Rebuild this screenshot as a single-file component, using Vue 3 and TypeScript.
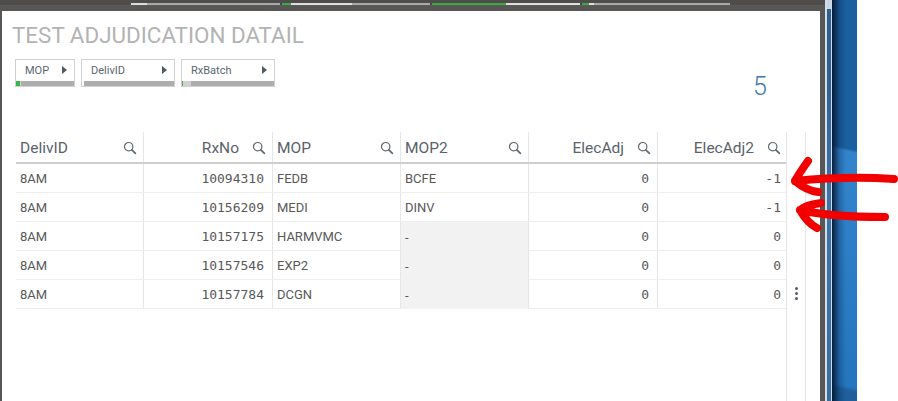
<script setup lang="ts">
interface Segment {
  width: number;
  color: string;
}

interface Column {
  label: string;
  field: string;
  align: "left" | "right";
  mono: boolean;
}

const segments: Segment[] = [
  { width: 16, color: "#dcdcdc" },
  { width: 133, color: "#a9a9a9" },
  { width: 2, color: "#4a4846" },
  { width: 9, color: "#3aaa45" },
  { width: 61, color: "#dedede" },
  { width: 78, color: "#a9a9a9" },
  { width: 2, color: "#4a4846" },
  { width: 74, color: "#3aaa45" },
  { width: 74, color: "#dedede" },
  { width: 2, color: "#4a4846" },
  { width: 7, color: "#3aaa45" },
  { width: 5, color: "#dedede" },
  { width: 136, color: "#a9a9a9" }
];

const filters = [
  { label: "MOP", width: 60, lead: "lead-mop" },
  { label: "DelivID", width: 94, lead: "lead-deliv" },
  { label: "RxBatch", width: 94, lead: "lead-batch" }
];

const columns: Column[] = [
  { label: "DelivID", field: "deliv", align: "left", mono: false },
  { label: "RxNo", field: "rx", align: "right", mono: true },
  { label: "MOP", field: "mop", align: "left", mono: false },
  { label: "MOP2", field: "mop2", align: "left", mono: false },
  { label: "ElecAdj", field: "adj", align: "right", mono: true },
  { label: "ElecAdj2", field: "adj2", align: "right", mono: true }
];

const rows: Record<string, string>[] = [
  { deliv: "8AM", rx: "10094310", mop: "FEDB", mop2: "BCFE", adj: "0", adj2: "-1" },
  { deliv: "8AM", rx: "10156209", mop: "MEDI", mop2: "DINV", adj: "0", adj2: "-1" },
  { deliv: "8AM", rx: "10157175", mop: "HARMVMC", mop2: "-", adj: "0", adj2: "0" },
  { deliv: "8AM", rx: "10157546", mop: "EXP2", mop2: "-", adj: "0", adj2: "0" },
  { deliv: "8AM", rx: "10157784", mop: "DCGN", mop2: "-", adj: "0", adj2: "0" }
];
</script>

<template>
  <div class="screen">
    <div class="app">
      <div class="topbar">
        <div class="strip">
          <span
            v-for="(seg, i) in segments"
            :key="i"
            :style="{ width: seg.width + 'px', background: seg.color }"
          />
        </div>
      </div>
      <div class="sheet">
        <h1 class="title">TEST ADJUDICATION DATAIL</h1>
        <div class="controls">
          <div class="filters">
            <div v-for="f in filters" :key="f.label" class="pill" :style="{ width: f.width + 'px' }">
              <div class="pill-main">
                <span>{{ f.label }}</span>
                <i class="caret" />
              </div>
              <div class="pill-bar">
                <i :class="f.lead" />
              </div>
            </div>
          </div>
          <div class="kpi">5</div>
        </div>
        <div class="table-wrap">
          <div class="table">
            <div class="row head">
              <div v-for="c in columns" :key="c.field" class="cell" :class="c.align">
                <span class="head-label">{{ c.label }}</span>
                <svg class="lens" width="14" height="14" viewBox="0 0 14 14">
                  <circle cx="5.7" cy="5.7" r="4.2" fill="none" stroke="#5f6972" stroke-width="1.2" />
                  <path d="M8.8 8.8 L12.4 12.4" stroke="#5f6972" stroke-width="1.7" stroke-linecap="round" />
                </svg>
              </div>
            </div>
            <div v-for="(r, i) in rows" :key="i" class="row body">
              <div
                v-for="c in columns"
                :key="c.field"
                class="cell"
                :class="[c.align, { mono: c.mono, nulled: r[c.field] === '-' }]"
              >
                {{ r[c.field] }}
              </div>
            </div>
          </div>
          <div class="rail">
            <div class="dots"><i /><i /><i /></div>
          </div>
        </div>
      </div>
    </div>
    <div class="scroller" />
    <div class="desk" />
    <div class="blank" />
    <svg class="ink" width="898" height="401" viewBox="0 0 898 401">
      <path d="M894 179 C865 177 825 178 795 181 M808 161 C803 168 798 175 795 181 C801 186 808 191 818 192" />
      <path d="M885 217 C860 217 825 216 800 210 M821 203 C812 204 805 206 800 210 C804 217 809 224 817 228" />
    </svg>
  </div>
</template>

<style>
html,
body {
  margin: 0;
  background: #fff;
}
</style>

<style scoped>
.screen {
  position: relative;
  display: flex;
  width: 898px;
  height: 401px;
  overflow: hidden;
  background: #fff;
  font-family: "Roboto", "Noto Sans", sans-serif;
}
.app {
  display: flex;
  flex-direction: column;
  width: 825px;
  background: #595755;
}
.topbar {
  flex: 0 0 11px;
  padding: 3px 0 0 131px;
  box-sizing: border-box;
  background: linear-gradient(#4f4d4b 0 5px, #5d5b59 5px 6px, #585654 6px);
}
.strip {
  display: flex;
  height: 2px;
}
.sheet {
  flex: 1;
  display: flex;
  flex-direction: column;
  min-height: 0;
  margin: 0 5px 0 2px;
  padding: 0 0 0 10px;
  background: #fff;
}
.title {
  margin: 11px 0 0;
  font-size: 22.4px;
  line-height: 26px;
  font-weight: 400;
  color: #b3b3b3;
  white-space: nowrap;
}
.controls {
  display: flex;
  justify-content: space-between;
  height: 73px;
  margin-top: 11px;
}
.filters {
  display: flex;
  gap: 6px;
  height: 28px;
  padding-left: 3px;
}
.pill {
  display: flex;
  flex-direction: column;
  box-sizing: border-box;
  border: 1px solid #d2d2d2;
  background: #fff;
}
.pill-main {
  flex: 1;
  display: flex;
  align-items: center;
  justify-content: space-between;
  padding: 0 7px 1px 9px;
  font-size: 11px;
  color: #5a6670;
}
.caret {
  width: 0;
  height: 0;
  border-left: 5px solid #4f5962;
  border-top: 4px solid transparent;
  border-bottom: 4px solid transparent;
}
.pill-bar {
  display: flex;
  height: 5px;
  background: #adadad;
}
.lead-mop {
  width: 4px;
  background: #3ab54a;
  box-shadow: 1px 0 0 #cfcfcf;
}
.lead-deliv {
  width: 2px;
  background: #fff;
}
.lead-batch {
  width: 9px;
  background: linear-gradient(90deg, #3ab54a 0 1px, #d0d0d0 1px);
}
.kpi {
  width: 67px;
  padding-top: 14px;
  box-sizing: border-box;
  font-size: 25px;
  line-height: 28px;
  font-weight: 300;
  color: #3f76b3;
}
.table-wrap {
  flex: 1;
  display: flex;
  min-height: 0;
  margin-left: 4px;
}
.table {
  flex: 0 0 771px;
}
.row {
  display: grid;
  grid-template-columns: 128px 129px 128px 128px 129px 129px;
}
.head {
  box-sizing: content-box;
  height: 30px;
  border-bottom: 2px solid #cfcfcf;
}
.body {
  height: 28px;
  border-bottom: 1px solid #eee;
}
.cell {
  display: flex;
  align-items: center;
  box-sizing: border-box;
  padding: 1px 4px 0;
  font-size: 13px;
  color: #595959;
  border-right: 1px solid #e6e6e6;
  white-space: nowrap;
}
.cell.right {
  justify-content: flex-end;
  padding-right: 8px;
}
.cell.right:last-child {
  padding-right: 5px;
}
.mono {
  font-family: "DejaVu Sans Mono", monospace;
}
.nulled {
  background: #f2f2f2;
  margin-bottom: -1px;
}
.head .cell {
  padding: 1px 6px 0 4px;
  font-size: 15.5px;
}
.head .cell.left {
  justify-content: space-between;
}
.head-label {
  color: #5a626a;
}
.lens {
  flex: none;
  margin-left: 13px;
}
.rail {
  flex: 0 0 20px;
  box-sizing: border-box;
  height: 100%;
  margin-left: -1px;
  border-left: 1px solid #e6e6e6;
  border-right: 1px solid #e6e6e6;
  padding-top: 155px;
}
.dots {
  display: flex;
  flex-direction: column;
  align-items: center;
  gap: 2px;
  margin-left: 1px;
}
.dots i {
  width: 3px;
  height: 3px;
  border-radius: 50%;
  background: #555b63;
}
.scroller {
  flex: 0 0 7px;
  box-sizing: border-box;
  border-style: solid;
  border-color: #d3dde8;
  border-width: 0 1px 0 2px;
  background: linear-gradient(#c9d6e4 0 9px, #2f5e90 9px 60px, #3e74a8 200px, #3a6e9f);
}
.desk {
  flex: 0 0 25px;
  background: linear-gradient(90deg, rgba(4, 22, 48, 0.92), rgba(8, 40, 80, 0.3) 30%, transparent 55%),
    linear-gradient(192deg, #1a5f9f 0 147px, #3384cc 150px, #2475bd 380px, #1f5f9c 384px);
}
.blank {
  flex: 1;
  background: #fff;
}
.ink {
  position: absolute;
  top: 0;
  left: 0;
  pointer-events: none;
}
.ink path {
  fill: none;
  stroke: #f20000;
  stroke-width: 8;
  stroke-linecap: round;
  stroke-linejoin: round;
}
</style>
